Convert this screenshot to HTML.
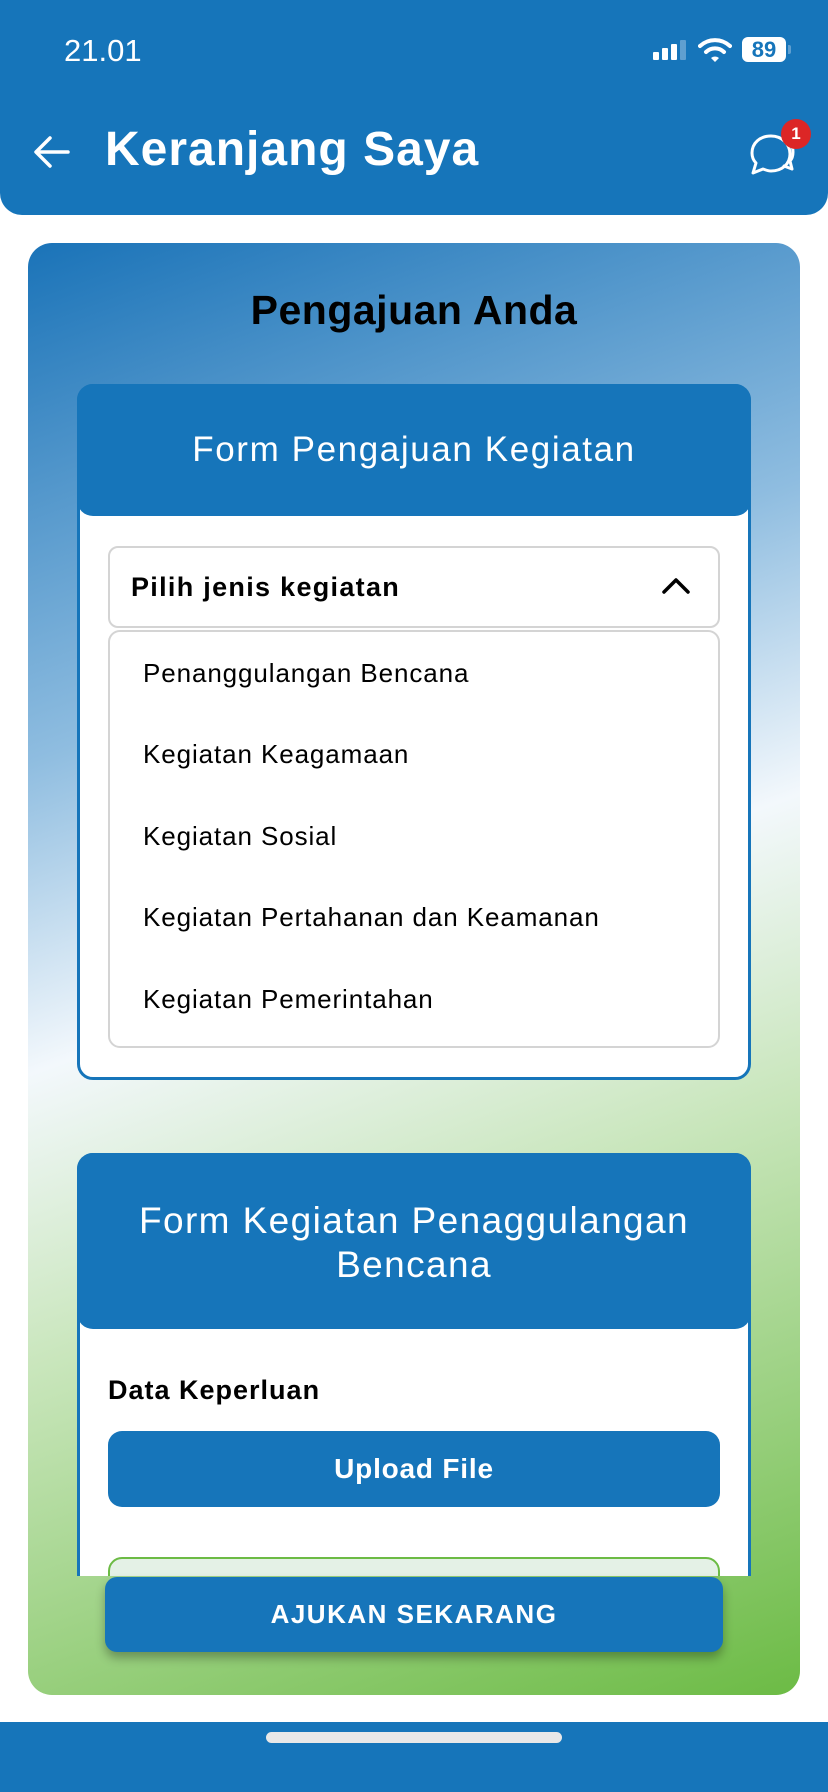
<!DOCTYPE html>
<html><head><meta charset="utf-8">
<style>
*{margin:0;padding:0;box-sizing:border-box}
body{width:828px;height:1792px;background:#fff;font-family:"Liberation Sans",sans-serif;position:relative;overflow:hidden}
.abs{position:absolute}
.blue{background:#1675ba}
.it{position:absolute;left:143px;font-size:26px;line-height:30px;letter-spacing:0.9px}
</style></head><body>
<div class="abs blue" style="left:0;top:0;width:828px;height:215px;border-radius:0 0 22px 22px"></div>
<div class="abs" style="left:64px;top:33px;color:#fff;font-size:31px;">21.01</div>
<div class="abs" style="left:653px;top:52px;width:6px;height:8px;background:#fff;border-radius:1px"></div>
<div class="abs" style="left:662px;top:48px;width:6px;height:12px;background:#fff;border-radius:1px"></div>
<div class="abs" style="left:671px;top:44px;width:6px;height:16px;background:#fff;border-radius:1px"></div>
<div class="abs" style="left:680px;top:40px;width:6px;height:20px;background:#5f9fd0;border-radius:1px"></div>
<svg class="abs" style="left:698px;top:37px" width="34" height="26" viewBox="0 0 34 26"><path d="M2 9 A22 22 0 0 1 32 9" stroke="#fff" stroke-width="4" fill="none" stroke-linecap="round"/><path d="M8 15 A13 13 0 0 1 26 15" stroke="#fff" stroke-width="4" fill="none" stroke-linecap="round"/><path d="M13 21 L17 25 L21 21 A6 6 0 0 0 13 21Z" fill="#fff"/></svg>
<div class="abs" style="left:742px;top:37px;width:44px;height:25px;background:#fff;border-radius:6px;color:#1675ba;font-size:22px;font-weight:bold;text-align:center;line-height:25px">89</div>
<div class="abs" style="left:788px;top:45px;width:3px;height:9px;background:#5f9fd0;border-radius:0 2px 2px 0"></div>
<svg class="abs" style="left:32px;top:134px" width="40" height="36" viewBox="0 0 40 36"><path d="M36 18H5M18 4L4 18L18 32" stroke="#fff" stroke-width="3.5" fill="none" stroke-linecap="round" stroke-linejoin="round"/></svg>
<div class="abs" style="left:105px;top:122px;color:#fff;font-size:48px;font-weight:bold;letter-spacing:1px">Keranjang Saya</div>
<svg class="abs" style="left:745px;top:128px" width="56" height="52" viewBox="0 0 56 52"><path d="M26 8C15 8 7 15 7 25c0 4 1 7 4 10l-3 10 10-4c3 1 5 2 8 2 11 0 19-7 19-17S37 8 26 8Z" stroke="#fff" stroke-width="3" fill="none" stroke-linejoin="round"/><path d="M40 10c5 3 8 8 8 14 0 4-1 7-3 9l2 8-8-3" stroke="#fff" stroke-width="3" fill="none" stroke-linejoin="round" stroke-linecap="round"/></svg>
<div class="abs" style="left:781px;top:119px;width:30px;height:30px;background:#dc2626;border-radius:50%;color:#fff;font-size:17px;font-weight:bold;text-align:center;line-height:30px">1</div>

<div class="abs" style="left:28px;top:243px;width:772px;height:1452px;border-radius:24px;overflow:hidden;background:linear-gradient(160deg,#1a73b8 0%,#8fbde0 30%,#f3f8fc 48%,#c9e6bc 65%,#6cbb45 100%)"></div>
<div class="abs" style="left:28px;top:287px;width:772px;text-align:center;font-size:41px;font-weight:bold;color:#000;letter-spacing:0.5px">Pengajuan Anda</div>

<div class="abs" style="left:77px;top:384px;width:674px;height:696px;background:#fff;border:3px solid #1675ba;border-radius:16px"></div>
<div class="abs blue" style="left:77px;top:384px;width:674px;height:132px;border-radius:16px;color:#fff;font-size:35px;text-align:center;line-height:132px;letter-spacing:1.6px">Form Pengajuan Kegiatan</div>
<div class="abs" style="left:108px;top:546px;width:612px;height:82px;border:2px solid #d4d4d4;border-radius:10px"></div>
<div class="abs" style="left:131px;top:572px;font-size:27px;font-weight:bold;letter-spacing:1.3px">Pilih jenis kegiatan</div>
<svg class="abs" style="left:661px;top:576px" width="30" height="20" viewBox="0 0 30 20"><path d="M3 16L15 4L27 16" stroke="#000" stroke-width="3.5" fill="none" stroke-linecap="round" stroke-linejoin="round"/></svg>
<div class="abs" style="left:108px;top:630px;width:612px;height:418px;border:2px solid #d4d4d4;border-radius:12px"></div>
<div class="it" style="top:658px">Penanggulangan Bencana</div>
<div class="it" style="top:739px">Kegiatan Keagamaan</div>
<div class="it" style="top:821px">Kegiatan Sosial</div>
<div class="it" style="top:902px">Kegiatan Pertahanan dan Keamanan</div>
<div class="it" style="top:984px">Kegiatan Pemerintahan</div>

<div class="abs" style="left:77px;top:1153px;width:674px;height:423px;overflow:hidden">
  <div class="abs" style="left:0;top:0;width:674px;height:600px;background:#fff;border:3px solid #1675ba;border-radius:16px"></div>
  <div class="abs blue" style="left:0;top:0;width:674px;height:176px;border-radius:16px;color:#fff;font-size:37px;text-align:center;padding-top:46px;line-height:44px;letter-spacing:1.4px">Form Kegiatan Penaggulangan<br>Bencana</div>
  <div class="abs" style="left:31px;top:222px;font-size:27px;font-weight:bold;letter-spacing:1px">Data Keperluan</div>
  <div class="abs blue" style="left:31px;top:278px;width:612px;height:76px;border-radius:14px;color:#fff;font-size:28px;font-weight:bold;text-align:center;line-height:76px;letter-spacing:0.8px">Upload File</div>
  <div class="abs" style="left:31px;top:404px;width:612px;height:80px;background:#e4f1e6;border:2px solid #6cbb45;border-radius:14px"></div>
</div>
<div class="abs blue" style="left:105px;top:1577px;width:618px;height:75px;border-radius:12px;color:#fff;font-size:26px;font-weight:bold;text-align:center;line-height:75px;letter-spacing:1.5px;box-shadow:0 6px 10px rgba(0,0,0,.3)">AJUKAN SEKARANG</div>

<div class="abs blue" style="left:0;top:1722px;width:828px;height:70px"></div>
<div class="abs" style="left:266px;top:1732px;width:296px;height:11px;background:#e8e8e8;border-radius:6px"></div>
</body></html>
